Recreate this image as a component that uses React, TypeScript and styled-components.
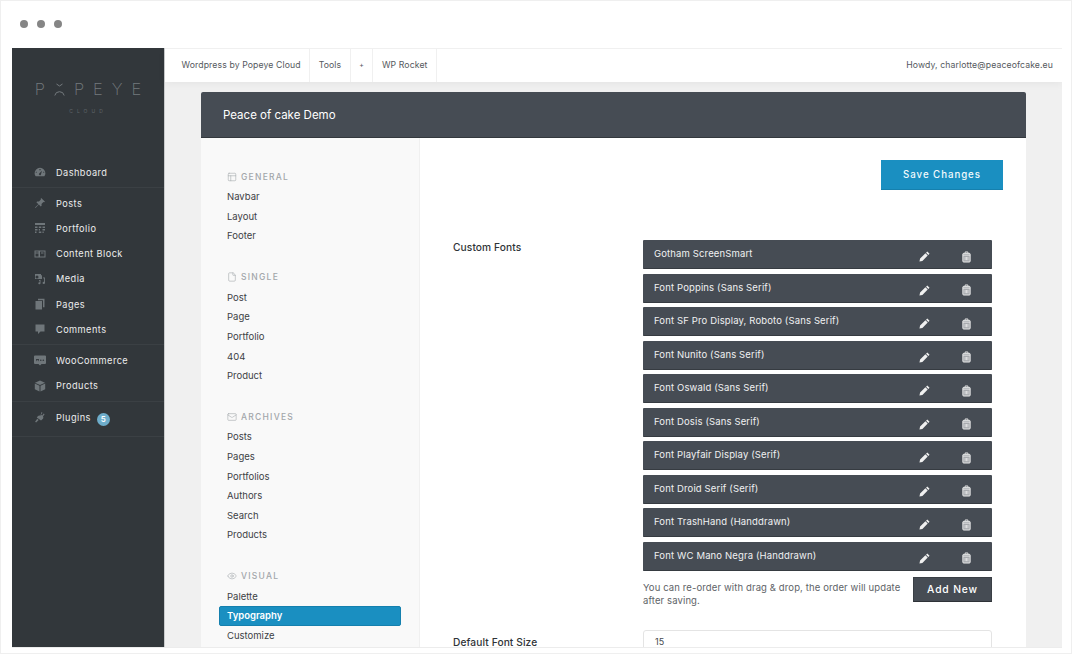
import React from 'react';
import styled, { createGlobalStyle } from 'styled-components';
import { PanelsTopLeft, File, Mail, Eye } from 'lucide-react';

const GlobalStyle = createGlobalStyle`
  html, body {
    margin: 0;
    padding: 0;
    background: #fff;
    overflow: hidden;
  }
  body {
    font-family: "Inter", "Liberation Sans", sans-serif;
  }
`

const Frame = styled.div`
  box-sizing: border-box;
  width: 1072px;
  height: 654px;
  border: 1px solid #efefef;
  display: flex;
  flex-direction: column;
  padding: 0 9px 5px 11px;
  background: #fff;
  overflow: hidden;
`

const TitleBar = styled.div`
  height: 47px;
  box-sizing: border-box;
  padding: 0 0 2px 8px;
  flex: none;
  display: flex;
  align-items: center;
  gap: 9px;
`

const Dot = styled.span`
  width: 8px;
  height: 8px;
  border-radius: 50%;
  background: #858585;
`

const Window = styled.div`
  flex: 1;
  min-height: 0;
  display: flex;
  overflow: hidden;
  border-bottom: 1px solid #ececec;
`

const Sidebar = styled.aside`
  width: 153px;
  box-sizing: border-box;
  flex: none;
  background: #32373b;
  border-right: 1px solid #c9cbcc;
`

const Logo = styled.div`
  height: 109px;
  padding-top: 31px;
  box-sizing: border-box;
  display: flex;
  flex-direction: column;
  align-items: center;
`

const LogoWord = styled.div`
  display: flex;
  align-items: center;
  gap: 9px;
  font-size: 16.5px;
  line-height: 20px;
  font-weight: 200;
  color: #747a7e;
`

const LogoSub = styled.div`
  margin-top: 8px;
  font-size: 5px;
  line-height: 8px;
  letter-spacing: 4px;
  color: #5f6569;
`

const MenuGroup = styled.div`
  padding: 2.5px 0;
  border-bottom: 1px solid #3b4044;
  &:last-child {
    padding: 3px 0 6px;
  }
`

const MenuItem = styled.div`
  height: 25.2px;
  display: flex;
  align-items: center;
  padding-left: 22px;
  font-size: 9.2px;
  font-weight: 400;
  letter-spacing: 0.45px;
  color: #eceded;
`

const MenuIcon = styled.span`
  width: 22px;
  display: flex;
  color: #6f767a;
`

const MenuBadge = styled.span`
  margin-left: 6px;
  width: 13px;
  height: 13px;
  margin-top: 4px;
  border-radius: 50%;
  background: #6eadcb;
  color: #fff;
  font-size: 8px;
  font-weight: 600;
  letter-spacing: 0;
  display: flex;
  align-items: center;
  justify-content: center;
`

const Body = styled.div`
  flex: 1;
  min-width: 0;
  background: #f0f0f0;
  display: flex;
  flex-direction: column;
`

const TopBar = styled.header`
  height: 34px;
  flex: none;
  display: flex;
  align-items: stretch;
  padding-left: 8px;
  background: #fff;
  border-top: 1px solid #f0f0f0;
  box-sizing: border-box;
  box-shadow: 0 2px 8px rgba(0, 0, 0, 0.05);
  font-size: 8.7px;
  letter-spacing: 0.1px;
  color: #55595d;
`

const TopItem = styled.div<{ $small?: boolean }>`
  display: flex;
  align-items: center;
  padding: 0 8.5px 2px;
  border-right: 1px solid #f0f0f0;
  font-size: ${p => (p.$small ? '7px' : 'inherit')};
`

const Howdy = styled.div`
  margin-left: auto;
  padding: 0 9px 2px 0;
  display: flex;
  align-items: center;
`

const Panel = styled.section`
  margin: 10px 36px 0 36px;
  flex: 1;
  min-height: 0;
  display: flex;
  flex-direction: column;
  background: #fff;
`

const PanelHeader = styled.div`
  height: 46px;
  flex: none;
  box-sizing: border-box;
  padding-left: 22px;
  display: flex;
  align-items: center;
  background: #464c54;
  border-bottom: 1px solid #33383d;
  border-radius: 2px 2px 0 0;
  color: #fff;
  font-size: 11.5px;
`

const PanelBody = styled.div`
  flex: 1;
  min-height: 0;
  display: flex;
  overflow: hidden;
`

const SubNav = styled.nav`
  width: 219px;
  flex: none;
  box-sizing: border-box;
  padding: 28px 18px 0 18px;
  background: #f9f9f9;
  border-right: 1px solid #f0f0f0;
`

const SubGroup = styled.div`
  margin-bottom: 20.7px;
`

const SubHead = styled.div`
  height: 21px;
  display: flex;
  align-items: center;
  gap: 4px;
  padding-left: 8px;
  font-size: 8.5px;
  font-weight: 500;
  letter-spacing: 1.25px;
  color: #a2a6aa;
  svg {
    color: #a9adb0;
  }
`

const SubItem = styled.div<{ $active?: boolean }>`
  height: 19.6px;
  box-sizing: border-box;
  display: flex;
  align-items: center;
  padding-left: 7px;
  font-size: 9.5px;
  font-weight: ${p => (p.$active ? 600 : 400)};
  color: ${p => (p.$active ? '#fff' : '#3d4145')};
  background: ${p => (p.$active ? '#1a8fc1' : 'transparent')};
  border: 1px solid ${p => (p.$active ? '#1580ae' : 'transparent')};
  border-radius: 2px;
`

const Main = styled.div`
  flex: 1;
  min-width: 0;
  padding: 22px 23px 0 33px;
`

const SaveRow = styled.div`
  display: flex;
  justify-content: flex-end;
  margin-bottom: 50px;
`

const SaveButton = styled.button`
  width: 122px;
  height: 30px;
  padding: 0;
  background: #1a8fc1;
  border: 0;
  border-bottom: 1px solid #1580ae;
  color: #f2fafd;
  font: 500 9.7px "Inter", sans-serif;
  letter-spacing: 0.95px;
`

const Field = styled.div`
  display: grid;
  grid-template-columns: 190px 349px;
  margin-bottom: 23px;
`

const FieldLabel = styled.div<{ $inset?: number }>`
  padding-top: ${p => p.$inset ?? 0}px;
  font-size: 10.2px;
  font-weight: 500;
  line-height: 14px;
  letter-spacing: 0.1px;
  color: #2f3337;
`

const FontList = styled.div`
  display: flex;
  flex-direction: column;
  gap: 4.5px;
`

const FontRow = styled.div`
  height: 29px;
  box-sizing: border-box;
  display: flex;
  align-items: center;
  padding: 0 20px 0 11px;
  background: #464c54;
  border-bottom: 1px solid #363b41;
  border-radius: 1px;
  color: #f0f1f2;
  font-size: 9.5px;
  letter-spacing: 0.14px;
`

const FontName = styled.span`
  flex: 1;
  margin-top: -1px;
`

const RowIcon = styled.span`
  display: flex;
  margin-top: 5px;
  margin-left: 31px;
  color: #f0f0f0;
`

const ListFooter = styled.div`
  margin-top: 6px;
  display: flex;
  justify-content: space-between;
  align-items: flex-start;
`

const Hint = styled.p`
  margin: 4px 0 0 0;
  width: 264px;
  font-size: 9.5px;
  line-height: 13px;
  letter-spacing: 0.12px;
  color: #5e6367;
`

const AddButton = styled.button`
  width: 79px;
  height: 25px;
  padding: 0;
  background: #464c54;
  border: 1px solid #3a3f45;
  border-bottom-color: #2e3237;
  color: #fff;
  font: 500 10.3px "Inter", sans-serif;
  letter-spacing: 0.85px;
`

const NumberBox = styled.div`
  height: 40px;
  box-sizing: border-box;
  padding: 5px 11px;
  border: 1px solid #e4e4e4;
  border-radius: 3px;
  font-size: 9px;
  color: #45494d;
`

const Svg: React.FC<{ size?: number; children: React.ReactNode }> = ({ size = 12, children }) => (
  <svg width={size} height={size} viewBox="0 0 12 12" fill="currentColor">{children}</svg>
)

const icons: Record<string, React.ReactNode> = {
  dashboard: (
    <Svg>
      <path d="M6 1.8a5.400 5.400 0 0 0-5.400 5.400c0 1.300.4 2.300 1.100 3h8.600c.7-.7 1.100-1.700 1.100-3A5.400 5.400 0 0 0 6 1.800zM5.400 3h1.200v1.300H5.400zM2.700 6.800H1.800V5.800h.9zm7.500 0h-.9V5.800h.9zM6.900 8.400a1 1 0 1 1-1.700-.9L8 4.800z" fillRule="evenodd" />
    </Svg>
  ),
  pin: (
    <Svg>
      <path d="M7.200 1l3.800 3.800-.8.500-.8-.2-1.900 1.900.1 1.800-.8.800-2-2L1.500 11l-.5-.5 3.400-3.300-2-2 .8-.8 1.800.1 1.900-1.900-.2-.8z" />
    </Svg>
  ),
  portfolio: (
    <Svg>
      <path d="M1 1h10v2H1zM1 4.500h2.500V6H1zM4.800 4.500h2.500V6H4.800zM8.500 4.500H11V6H8.500zM1 7h2.500v1.500H1zM4.800 7h1.200v1.500H4.800zM8.500 7H11v1.500H8.500zM1 9.500h1.500V11H1zM4.800 9.500h2.500V11H4.800zM8.500 9.500h1.200V11H8.500z" />
    </Svg>
  ),
  block: (
    <Svg>
      <path d="M.5 2.500h11v7H.5zM1.500 3.500v1h3v-1zm0 2v3h3v-3zm4.500-2v5h4.500v-5zm1 1h2.500v1H7z" fillRule="evenodd" />
    </Svg>
  ),
  media: (
    <Svg>
      <path d="M1 1h6v1.200h1V6H1zM3 2.500A1.500 1.500 0 1 0 3 5.500 1.500 1.500 0 0 0 3 2.500zM8.800 4.500H11v5.300a1.200 1.200 0 1 1-.9-1.100V5.500H9.500zM5 7.200l1.500-.4v3.400a1.100 1.100 0 1 1-.8-1V8l-.7.200z" fillRule="evenodd" />
    </Svg>
  ),
  pages: (
    <Svg>
      <path d="M4 .8h6.500v8.400H9V2.300H4zM1.500 3h6.500v8.400H1.500z" />
    </Svg>
  ),
  comments: (
    <Svg>
      <path d="M1.500 1.500h9v7H6.500L4 11V8.500H1.500z" />
    </Svg>
  ),
  woo: (
    <svg width="12" height="12" viewBox="0 0 12 12" fill="currentColor">
      <path d="M1 1.500h10a1 1 0 0 1 1 1v6.500a1 1 0 0 1-1 1H7.500L6 11.500 4.500 10H1a1 1 0 0 1-1-1V2.500a1 1 0 0 1 1-1zM2 5l.6 2.500L3.500 5.500l.9 2L5 5M6 6.200a.8.800 0 1 0 1.600 0 .8.800 0 0 0-1.600 0M8.500 6.200a.8.800 0 1 0 1.600 0 .8.800 0 0 0-1.600 0" fillRule="evenodd" />
    </svg>
  ),
  products: (
    <Svg>
      <path d="M6 .5l5 2.200-5 2.200-5-2.200zM.8 3.600L5.500 5.700v5.800L.8 9.300zM11.200 3.600v5.700L6.500 11.500V5.700z" />
    </Svg>
  ),
  plugins: (
    <Svg>
      <path d="M7.500 1l1 .7-1.500 2 1.200.9 1.500-2 .9.7-1.600 2.100c.6.900.4 1.900-.3 2.500L7 9.500l-4.200-3 1.200-1.600c.7-.6 1.700-.7 2.400-.2zM3.200 7.800l1.500 1.100-2.600 2.600-1-.7z" />
    </Svg>
  ),
}

const Pencil = () => (
  <svg width="11" height="11" viewBox="0 0 12 12" fill="currentColor">
    <path d="M9 .5l2.500 2.500-1.300 1.300-2.500-2.500zM7 2.500L9.500 5l-5.800 5.800-3.200.7.700-3.200z" />
  </svg>
)

const Trash = () => (
  <svg width="11" height="12" viewBox="0 0 12 13" fill="none" stroke="currentColor" strokeWidth="1">
    <path d="M4.500 2V1h3v1" />
    <rect x="2" y="2.500" width="8" height="9.500" rx="1" fill="#a7aaae" />
    <path d="M2 4.500h8M4.500 6.500v3.500M6 6.500v3.500M7.500 6.500v3.500" strokeWidth="0.8" />
  </svg>
)

const LogoMark = () => (
  <svg width="11" height="13" viewBox="0 0 11 13" fill="none" stroke="#747a7e" strokeWidth="1">
    <path d="M2.500 1l3 2 3-2" />
    <path d="M.8 12.500a4.800 4.800 0 0 1 9.400 0" />
  </svg>
)

type MenuEntry = { label: string; icon: string; badge?: string }

const menuGroups: MenuEntry[][] = [
  [{ label: 'Dashboard', icon: 'dashboard' }],
  [
    { label: 'Posts', icon: 'pin' },
    { label: 'Portfolio', icon: 'portfolio' },
    { label: 'Content Block', icon: 'block' },
    { label: 'Media', icon: 'media' },
    { label: 'Pages', icon: 'pages' },
    { label: 'Comments', icon: 'comments' },
  ],
  [
    { label: 'WooCommerce', icon: 'woo' },
    { label: 'Products', icon: 'products' },
  ],
  [{ label: 'Plugins', icon: 'plugins', badge: '5' }],
]

const subGroups = [
  { title: 'GENERAL', Icon: PanelsTopLeft, items: ['Navbar', 'Layout', 'Footer'] },
  { title: 'SINGLE', Icon: File, items: ['Post', 'Page', 'Portfolio', '404', 'Product'] },
  { title: 'ARCHIVES', Icon: Mail, items: ['Posts', 'Pages', 'Portfolios', 'Authors', 'Search', 'Products'] },
  { title: 'VISUAL', Icon: Eye, items: ['Palette', 'Typography', 'Customize'] },
]

const fonts = [
  'Gotham ScreenSmart',
  'Font Poppins (Sans Serif)',
  'Font SF Pro Display, Roboto (Sans Serif)',
  'Font Nunito (Sans Serif)',
  'Font Oswald (Sans Serif)',
  'Font Dosis (Sans Serif)',
  'Font Playfair Display (Serif)',
  'Font Droid Serif (Serif)',
  'Font TrashHand (Handdrawn)',
  'Font WC Mano Negra (Handdrawn)',
]

const App: React.FC = () => {
  return (
    <>
      <GlobalStyle />
      <Frame>
        <TitleBar>
          <Dot />
          <Dot />
          <Dot />
        </TitleBar>
        <Window>
          <Sidebar>
            <Logo>
              <LogoWord>
                <span>P</span>
                <LogoMark />
                <span>P</span>
                <span>E</span>
                <span>Y</span>
                <span>E</span>
              </LogoWord>
              <LogoSub>CLOUD</LogoSub>
            </Logo>
            {menuGroups.map((group, i) => (
              <MenuGroup key={i}>
                {group.map(item => (
                  <MenuItem key={item.label}>
                    <MenuIcon>{icons[item.icon]}</MenuIcon>
                    {item.label}
                    {item.badge && <MenuBadge>{item.badge}</MenuBadge>}
                  </MenuItem>
                ))}
              </MenuGroup>
            ))}
          </Sidebar>
          <Body>
            <TopBar>
              <TopItem>Wordpress by Popeye Cloud</TopItem>
              <TopItem>Tools</TopItem>
              <TopItem $small>+</TopItem>
              <TopItem>WP Rocket</TopItem>
              <Howdy>Howdy, charlotte@peaceofcake.eu</Howdy>
            </TopBar>
            <Panel>
              <PanelHeader>Peace of cake Demo</PanelHeader>
              <PanelBody>
                <SubNav>
                  {subGroups.map(({ title, Icon, items }) => (
                    <SubGroup key={title}>
                      <SubHead>
                        <Icon size={10} strokeWidth={1.5} />
                        {title}
                      </SubHead>
                      {items.map(item => (
                        <SubItem key={item} $active={item === 'Typography'}>{item}</SubItem>
                      ))}
                    </SubGroup>
                  ))}
                </SubNav>
                <Main>
                  <SaveRow>
                    <SaveButton>Save Changes</SaveButton>
                  </SaveRow>
                  <Field>
                    <FieldLabel>Custom Fonts</FieldLabel>
                    <div>
                      <FontList>
                        {fonts.map(name => (
                          <FontRow key={name}>
                            <FontName>{name}</FontName>
                            <RowIcon><Pencil /></RowIcon>
                            <RowIcon><Trash /></RowIcon>
                          </FontRow>
                        ))}
                      </FontList>
                      <ListFooter>
                        <Hint>You can re-order with drag &amp; drop, the order will update after saving.</Hint>
                        <AddButton>Add New</AddButton>
                      </ListFooter>
                    </div>
                  </Field>
                  <Field>
                    <FieldLabel $inset={5}>Default Font Size</FieldLabel>
                    <NumberBox>15</NumberBox>
                  </Field>
                </Main>
              </PanelBody>
            </Panel>
          </Body>
        </Window>
      </Frame>
    </>
  )
}

export default App;
